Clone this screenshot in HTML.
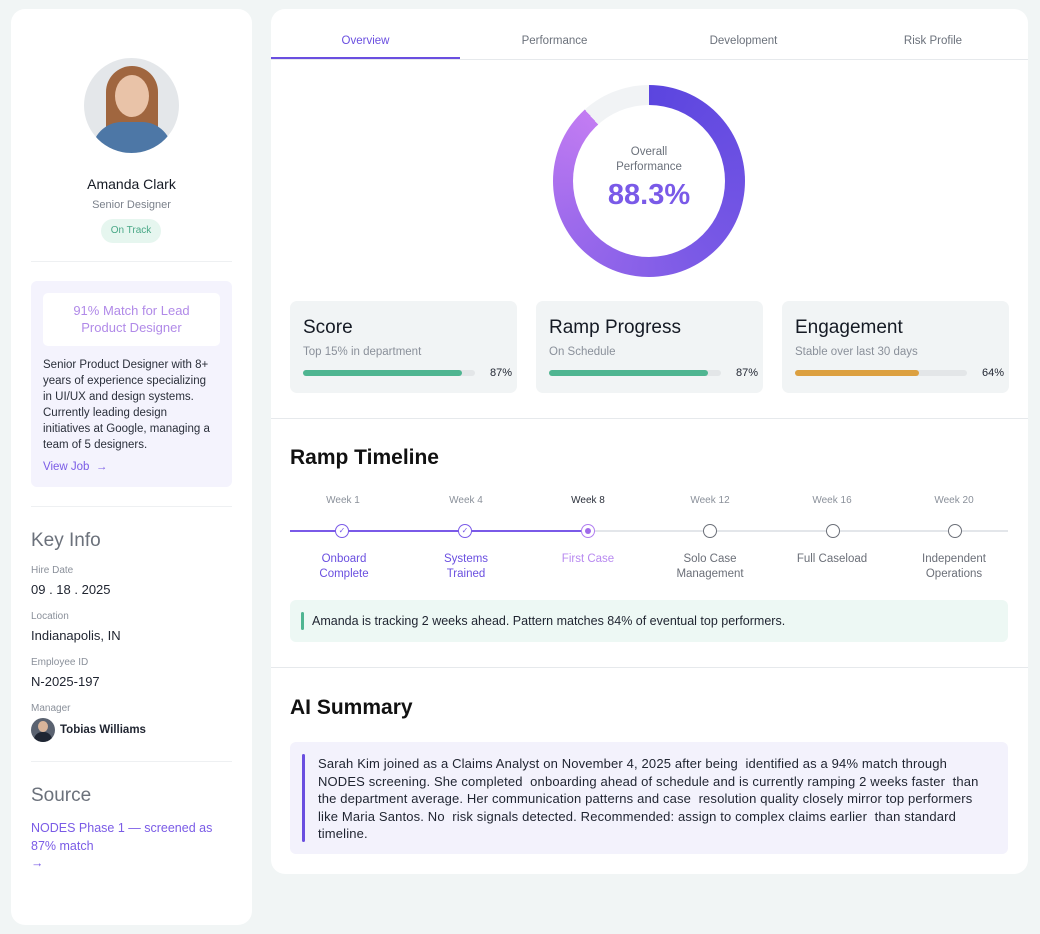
<!DOCTYPE html>
<html><head><meta charset="utf-8"><style>
*{box-sizing:border-box;margin:0;padding:0}
body{width:1040px;height:934px;background:#f1f5f5;font-family:"Liberation Sans",sans-serif;position:relative;overflow:hidden;color:#111827}
.a{position:absolute}
.card{background:#fff;border-radius:14px;position:absolute}
.c{text-align:center}
.lbl{font-size:10px;color:#8a909a}
.val{font-size:13px;color:#1f2430}
.stat{position:absolute;top:301px;width:227px;height:92px;background:#f1f4f5;border-radius:7px}
.stat h3{position:absolute;left:13px;top:16px;font-size:19px;font-weight:normal;color:#151a24}
.stat p{position:absolute;left:13px;top:45px;font-size:11.5px;color:#8a909a}
.bar{position:absolute;left:13px;top:69px;width:172px;height:6px;background:#e3e6e8;border-radius:3px}
.bar i{display:block;height:6px;border-radius:3px}
.stat b{position:absolute;right:5px;top:66px;font-size:11px;font-weight:normal;color:#1f2430}
.wk{position:absolute;top:495px;width:100px;margin-left:-50px;text-align:center;font-size:10px;color:#8a909a}
.nd{position:absolute;top:524px;width:14px;height:14px;margin-left:-7px;border-radius:50%;background:#fff;border:1.5px solid #6b6f78}
.nl{position:absolute;top:552px;width:110px;margin-left:-55px;text-align:center;font-size:11.5px;line-height:14.5px;color:#6b6f78}
</style></head><body>

<div class="card" style="left:11px;top:9px;width:241px;height:916px">
  <div class="a" style="left:73px;top:49px;width:95px;height:95px;border-radius:50%;background:#e4e7ea;overflow:hidden">
    <div class="a" style="left:22px;top:8px;width:52px;height:70px;border-radius:26px 26px 10px 10px;background:#a0663f"></div>
    <div class="a" style="left:31px;top:17px;width:34px;height:42px;border-radius:50%;background:#e9c3a8"></div>
    <div class="a" style="left:8px;top:64px;width:80px;height:50px;border-radius:30px 30px 0 0;background:#4d77a6"></div>
  </div>
  <div class="a c" style="left:0;width:241px;top:167px;font-size:14px;color:#151a24">Amanda Clark</div>
  <div class="a c" style="left:0;width:241px;top:190px;font-size:11px;color:#7b818b">Senior Designer</div>
  <div class="a c" style="left:90px;top:210px;width:60px;height:24px;border-radius:12px;background:#e6f6ef;font-size:10px;line-height:24px;color:#4aa887">On Track</div>
  <div class="a" style="left:20px;top:252px;width:201px;height:1px;background:#eef0f2"></div>
  <div class="a" style="left:20px;top:272px;width:201px;height:206px;background:#f4f3fd;border-radius:6px">
    <div class="a c" style="left:12px;top:12px;width:177px;height:53px;background:#fff;border-radius:5px;padding-top:9px;font-size:13px;line-height:17px;color:#b18ae8">91% Match for Lead<br>Product Designer</div>
    <div class="a" style="left:12px;top:76px;width:190px;font-size:11.5px;line-height:16px;color:#2a2f3a;white-space:nowrap">Senior Product Designer with 8+<br>years of experience specializing<br>in UI/UX and design systems.<br>Currently leading design<br>initiatives at Google, managing a<br>team of 5 designers.</div>
    <div class="a" style="left:12px;top:180px;font-size:11.5px;color:#7a5be6">View Job &nbsp;→</div>
  </div>
  <div class="a" style="left:20px;top:497px;width:201px;height:1px;background:#eef0f2"></div>
  <div class="a" style="left:20px;top:521px;font-size:19px;color:#6b717b">Key Info</div>
  <div class="a lbl" style="left:20px;top:556px">Hire Date</div>
  <div class="a val" style="left:20px;top:573px">09 . 18 . 2025</div>
  <div class="a lbl" style="left:20px;top:602px">Location</div>
  <div class="a val" style="left:20px;top:619px">Indianapolis, IN</div>
  <div class="a lbl" style="left:20px;top:648px">Employee ID</div>
  <div class="a val" style="left:20px;top:665px">N-2025-197</div>
  <div class="a lbl" style="left:20px;top:694px">Manager</div>
  <div class="a" style="left:20px;top:709px;width:24px;height:24px;border-radius:50%;background:#5a6270;overflow:hidden"><div class="a" style="left:7px;top:3px;width:10px;height:11px;border-radius:50%;background:#d8b49a"></div><div class="a" style="left:3px;top:14px;width:18px;height:12px;border-radius:8px 8px 0 0;background:#1f2633"></div></div>
  <div class="a" style="left:49px;top:715px;font-size:11.5px;font-weight:bold;color:#1f2430">Tobias Williams</div>
  <div class="a" style="left:20px;top:752px;width:201px;height:1px;background:#eef0f2"></div>
  <div class="a" style="left:20px;top:776px;font-size:19px;color:#6b717b">Source</div>
  <div class="a" style="left:20px;top:811px;width:200px;font-size:12.5px;line-height:17.5px;color:#7a5be6">NODES Phase 1 — screened as 87% match<br>→</div>
</div>

<div class="card" style="left:271px;top:9px;width:757px;height:865px;overflow:hidden">
  <div class="a c" style="left:0;top:26px;width:189px;font-size:11.5px;color:#6a4fe0">Overview</div>
  <div class="a c" style="left:189px;top:26px;width:189px;font-size:11.5px;color:#6b717b">Performance</div>
  <div class="a c" style="left:378px;top:26px;width:189px;font-size:11.5px;color:#6b717b">Development</div>
  <div class="a c" style="left:567px;top:26px;width:190px;font-size:11.5px;color:#6b717b">Risk Profile</div>
  <div class="a" style="left:0;top:50px;width:757px;height:1px;background:#e6e9ec"></div>
  <div class="a" style="left:0;top:48px;width:189px;height:2px;background:#6a4fe0"></div>

  <div class="a" style="left:282px;top:76px;width:192px;height:192px;border-radius:50%;background:conic-gradient(from 0deg,#5b45df 0deg,#7b5ae6 150deg,#9d6aec 240deg,#c27cf2 318deg,#f1f3f5 318deg,#f1f3f5 360deg)"></div>
  <div class="a" style="left:302px;top:96px;width:152px;height:152px;border-radius:50%;background:#fff"></div>
  <div class="a c" style="left:282px;top:136px;width:192px;font-size:11.5px;line-height:14.5px;color:#6b717b">Overall<br>Performance</div>
  <div class="a c" style="left:282px;top:170px;width:192px;font-size:29px;font-weight:bold;color:#7a5ae8">88.3%</div>
</div>

<div class="stat" style="left:290px"><h3>Score</h3><p>Top 15% in department</p><div class="bar"><i style="width:159px;background:#4fb591"></i></div><b>87%</b></div>
<div class="stat" style="left:536px"><h3>Ramp Progress</h3><p>On Schedule</p><div class="bar"><i style="width:159px;background:#4fb591"></i></div><b>87%</b></div>
<div class="stat" style="left:782px"><h3>Engagement</h3><p>Stable over last 30 days</p><div class="bar"><i style="width:124px;background:#dca040"></i></div><b>64%</b></div>

<div class="a" style="left:271px;top:418px;width:757px;height:1px;background:#e6e9ec"></div>
<div class="a" style="left:290px;top:446px;font-size:21px;font-weight:bold;color:#111">Ramp Timeline</div>

<div class="a" style="left:290px;top:530px;width:718px;height:1.5px;background:#e3e6ea"></div>
<div class="a" style="left:290px;top:529.5px;width:298px;height:2px;background:#7a5ae8"></div>
<div class="wk" style="left:343px">Week 1</div>
<div class="wk" style="left:466px">Week 4</div>
<div class="wk" style="left:588px;color:#2a2f3a">Week 8</div>
<div class="wk" style="left:710px">Week 12</div>
<div class="wk" style="left:832px">Week 16</div>
<div class="wk" style="left:954px">Week 20</div>
<div class="nd" style="left:342px;border-color:#7a5ae8;font-size:8px;line-height:11px;text-align:center;color:#7a5ae8">✓</div>
<div class="nd" style="left:465px;border-color:#7a5ae8;font-size:8px;line-height:11px;text-align:center;color:#7a5ae8">✓</div>
<div class="nd" style="left:588px;border-color:#b07ef0"><div class="a" style="left:2.5px;top:2.5px;width:6px;height:6px;border-radius:50%;background:#a06aea"></div></div>
<div class="nd" style="left:710px"></div>
<div class="nd" style="left:833px"></div>
<div class="nd" style="left:955px"></div>
<div class="nl" style="left:344px;color:#6a4fe0">Onboard<br>Complete</div>
<div class="nl" style="left:466px;color:#6a4fe0">Systems<br>Trained</div>
<div class="nl" style="left:588px;color:#b88af0">First Case</div>
<div class="nl" style="left:710px">Solo Case<br>Management</div>
<div class="nl" style="left:832px">Full Caseload</div>
<div class="nl" style="left:954px">Independent<br>Operations</div>

<div class="a" style="left:290px;top:600px;width:718px;height:42px;background:#edf8f4;border-radius:6px">
  <div class="a" style="left:11px;top:12px;width:3px;height:18px;background:#4fb591;border-radius:2px"></div>
  <div class="a" style="left:22px;top:14px;font-size:12.5px;color:#1f2430">Amanda is tracking 2 weeks ahead. Pattern matches 84% of eventual top performers.</div>
</div>

<div class="a" style="left:271px;top:667px;width:757px;height:1px;background:#e6e9ec"></div>
<div class="a" style="left:290px;top:696px;font-size:21px;font-weight:bold;color:#111">AI Summary</div>
<div class="a" style="left:290px;top:742px;width:718px;height:112px;background:#f3f2fc;border-radius:6px">
  <div class="a" style="left:12px;top:12px;width:3px;height:88px;background:#6a4fe0;border-radius:2px"></div>
  <div class="a" style="left:28px;top:13px;width:690px;font-size:13px;letter-spacing:0.15px;line-height:17.5px;color:#1f2430;white-space:nowrap">Sarah Kim joined as a Claims Analyst on November 4, 2025 after being &nbsp;identified as a 94% match through<br>NODES screening. She completed &nbsp;onboarding ahead of schedule and is currently ramping 2 weeks faster &nbsp;than<br>the department average. Her communication patterns and case &nbsp;resolution quality closely mirror top performers<br>like Maria Santos. No &nbsp;risk signals detected. Recommended: assign to complex claims earlier &nbsp;than standard<br>timeline.</div>
</div>
</body></html>
